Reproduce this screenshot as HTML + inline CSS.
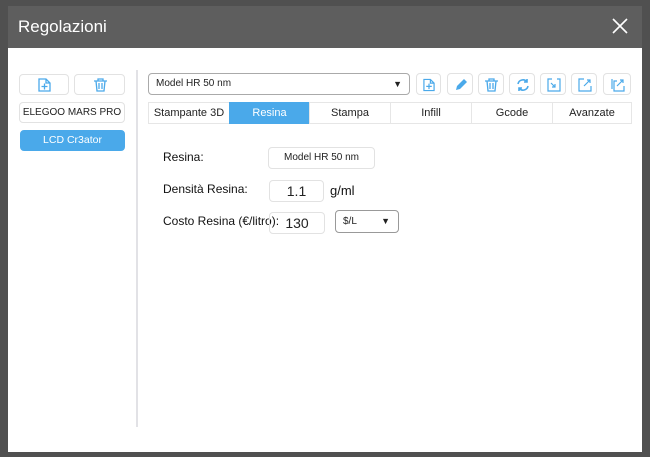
<!DOCTYPE html>
<html><head><meta charset="utf-8"><style>
*{box-sizing:border-box;margin:0;padding:0}
body{width:650px;height:457px;background:#505050;font-family:"Liberation Sans",sans-serif;position:relative;overflow:hidden}
.dlg{position:absolute;left:8px;top:6px;width:634px;height:446px;background:#fff}
.title{position:absolute;left:0;top:0;width:634px;height:42px;background:#5e5e5e;color:#fff;font-size:17px;line-height:42px;padding-left:10px}
.x{position:absolute;right:14px;top:12px;width:16px;height:16px}
.a{position:absolute}
.btn{position:absolute;border:1px solid #e2e2e2;border-radius:4px;background:#fff;font-size:10.5px;color:#222;text-align:center;white-space:nowrap}
.blue{background:#4aa9ea;color:#fff;border-color:#4aa9ea}
.tab{position:absolute;top:102px;height:22px;border:1px solid #e6e6e6;font-size:11px;line-height:20px;text-align:center;color:#222}
.lbl{position:absolute;font-size:12px;color:#111;white-space:nowrap}
svg.i{position:absolute;left:6px;top:4px}
</style></head><body>
<div class="dlg">
<div class="title">Regolazioni
<svg class="x" viewBox="0 0 16 16"><path d="M1 1L15 15M15 1L1 15" stroke="#fff" stroke-width="1.6"/></svg></div>
</div>
<div class="btn" style="left:19px;top:74px;width:50px;height:21px"><svg class="i" style="left:18px;top:3px" width="13" height="14" viewBox="0 0 13 14" fill="none" stroke="#4aa9ea" stroke-width="1.3"><path d="M1 1h7l4 4v8H1z M8 1v4h4 M6.5 5.5v6 M3.5 8.5h6"/></svg></div>
<div class="btn" style="left:74px;top:74px;width:51px;height:21px"><svg class="i" style="left:19px;top:3px" width="13" height="14" viewBox="0 0 13 14" fill="none" stroke="#4aa9ea" stroke-width="1.3"><path d="M0 3h13 M4 3V1h5v2 M2 3l1 10h7l1-10 M5 5v6 M8 5v6"/></svg></div>
<div class="btn" style="left:19px;top:102px;width:106px;height:21px;line-height:19px;font-size:10px">ELEGOO MARS PRO</div>
<div class="btn blue" style="left:20px;top:130px;width:105px;height:21px;line-height:19px">LCD Cr3ator</div>
<div class="a" style="left:136px;top:70px;width:2px;height:357px;background:#e2e2e6"></div>
<div class="btn" style="left:148px;top:73px;width:262px;height:22px;border-color:#aaa;text-align:left;padding-left:7px;line-height:20px;font-size:10px">Model HR 50 nm<span style="position:absolute;right:7px;top:0;font-size:9px">▼</span></div>
<div class="btn" style="left:416px;top:73px;width:25px;height:22px"><svg class="i" width="12" height="14" viewBox="0 0 13 14" fill="none" stroke="#4aa9ea" stroke-width="1.3"><path d="M1 1h7l4 4v8H1z M8 1v4h4 M6.5 5.5v6 M3.5 8.5h6"/></svg></div>
<div class="btn" style="left:447px;top:73px;width:26px;height:22px"><svg class="i" width="14" height="14" viewBox="0 0 14 14"><path d="M2 12l1-4 7-7 3 3-7 7z" fill="#4aa9ea"/></svg></div>
<div class="btn" style="left:478px;top:73px;width:26px;height:22px"><svg class="i" width="13" height="14" viewBox="0 0 13 14" fill="none" stroke="#4aa9ea" stroke-width="1.3"><path d="M0 3h13 M4 3V1h5v2 M2 3l1 10h7l1-10 M5 5v6 M8 5v6"/></svg></div>
<div class="btn" style="left:509px;top:73px;width:26px;height:22px"><svg class="i" width="14" height="14" viewBox="0 0 14 14" fill="none" stroke="#4aa9ea" stroke-width="1.6"><path d="M2 6a5 5 0 0 1 9-2 M12 8a5 5 0 0 1-9 2"/><path d="M11 1v3H8 M3 13v-3h3"/></svg></div>
<div class="btn" style="left:540px;top:73px;width:26px;height:22px"><svg class="i" width="14" height="14" viewBox="0 0 14 14" fill="none" stroke="#4aa9ea" stroke-width="1.2"><path d="M5 1H1v12h12V1h-3 M4 5l4 4 M8 6v3H5"/></svg></div>
<div class="btn" style="left:571px;top:73px;width:26px;height:22px"><svg class="i" width="14" height="14" viewBox="0 0 14 14" fill="none" stroke="#4aa9ea" stroke-width="1.2"><path d="M6 1H1v12h12V8 M6 8l6-6 M9 2h3v3"/></svg></div>
<div class="btn" style="left:603px;top:73px;width:28px;height:22px"><svg class="i" style="left:7px" width="14" height="14" viewBox="0 0 14 14" fill="none" stroke="#4aa9ea" stroke-width="1.2"><path d="M6 3H3v10h10V8 M1 1v10 M6 8l6-6 M9 2h3v3"/></svg></div>
<div class="tab" style="left:148px;width:82px">Stampante 3D</div>
<div class="tab blue" style="left:229px;width:81px;border-color:#4aa9ea;color:#fff">Resina</div>
<div class="tab" style="left:309px;width:82px">Stampa</div>
<div class="tab" style="left:390px;width:82px">Infill</div>
<div class="tab" style="left:471px;width:82px">Gcode</div>
<div class="tab" style="left:552px;width:80px">Avanzate</div>
<div class="lbl" style="left:163px;top:150px">Resina:</div>
<div class="btn" style="left:268px;top:147px;width:107px;height:22px;line-height:20px;font-size:10px">Model HR 50 nm</div>
<div class="lbl" style="left:163px;top:182px">Densità Resina:</div>
<div class="btn" style="left:269px;top:180px;width:55px;height:22px;line-height:20px;font-size:14px">1.1</div>
<div class="lbl" style="left:330px;top:183px;font-size:13px">g/ml</div>
<div class="lbl" style="left:163px;top:214px">Costo Resina (€/litro):</div>
<div class="btn" style="left:269px;top:212px;width:56px;height:22px;line-height:20px;font-size:14px;background:transparent">130</div>
<div class="btn" style="left:335px;top:210px;width:64px;height:23px;border-color:#999;text-align:left;padding-left:7px;line-height:21px;font-size:10px">$/L<span style="position:absolute;right:8px;top:0;font-size:9px">▼</span></div>
</body></html>
